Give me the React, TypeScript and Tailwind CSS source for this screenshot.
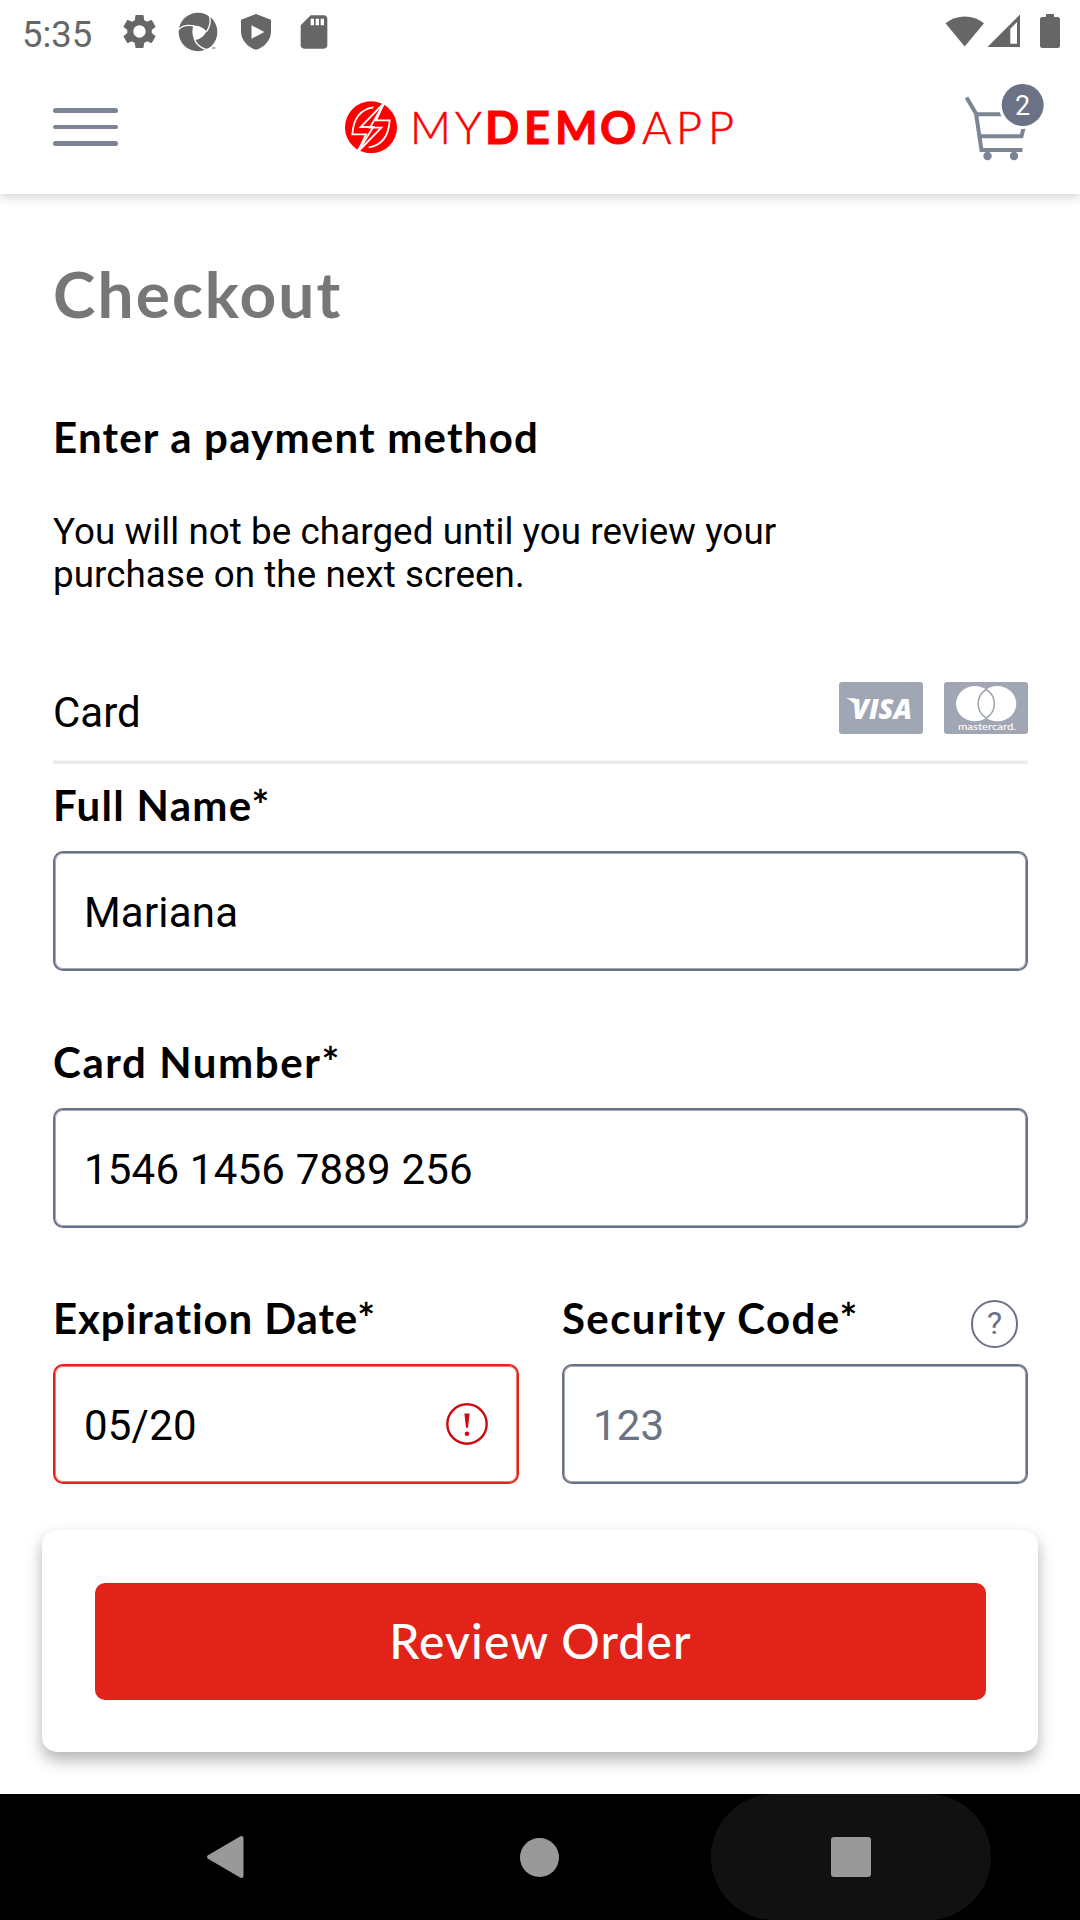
import type { ReactNode } from 'react';
import { MdSettings, MdSdCard } from 'react-icons/md';

function CaptureIcon() {
  return (
    <svg width="40" height="40" viewBox="0 0 120 120">
      <circle cx="60" cy="60" r="58" fill="#666" />
      <path d="M46 42 C62 40 74 46 86 58 C76 76 62 84 50 84 C43 72 41 56 46 42Z" fill="#fff" />
      <g fill="none" stroke="#fff" strokeWidth="4">
        <path d="M0 54 C12 40 30 38 50 42" />
        <path d="M94 10 C100 28 96 44 86 59" />
        <path d="M48 78 C54 96 68 108 86 113" />
      </g>
      <path d="M80 118 L90 108 L108 106 L112 118Z" fill="#fff" />
      <path d="M102 108 H112" stroke="#666" strokeWidth="3" />
    </svg>
  );
}

function ShieldIcon() {
  return (
    <svg width="30" height="36" viewBox="0 0 30 36">
      <path d="M15 0 L30 5.8 V17 C30 26 23.5 33.4 15 35.8 C6.5 33.4 0 26 0 17 V5.8Z" fill="#666" />
      <path d="M10.5 11.3 L23.3 18 L10.5 24.7Z" fill="#fff" />
    </svg>
  );
}

function StatusBar() {
  return (
    <div className="relative z-10 flex h-[63px] shrink-0 items-start justify-between bg-white font-[Roboto,sans-serif] text-[#666]">
      <div className="flex items-start pl-[22px]">
        <span className="w-[97px] pt-px text-[36.500px] leading-[67px]">5:35</span>
        <MdSettings className="mt-[11px] h-[41px] w-[41px]" />
        <div className="mt-[12px] ml-[18px]">
          <CaptureIcon />
        </div>
        <div className="mt-[14px] ml-[23px]">
          <ShieldIcon />
        </div>
        <MdSdCard className="mt-[12px] ml-[23px] h-[40px] w-[40px]" />
      </div>
      <svg width="116" height="34" viewBox="0 0 116 34" className="mt-[14px] mr-[19px]">
        <g fill="#666">
          <path d="M0.5 9.3 A31 31 0 0 1 39 9.3 L19.7 32.5Z" />
          <path fillRule="evenodd" d="M75 0.5 V33 H42.5Z M72 8 L65.300 14.700 V29.700 H72Z" />
          <path d="M101 0 H109 V3 H112.500 Q115 3 115 5 V31.500 Q115 34 112.500 34 H97.500 Q95 34 95 31.500 V5 Q95 3 97.500 3 H101Z" />
        </g>
      </svg>
    </div>
  );
}

function Logo() {
  return (
    <svg width="400" height="72" viewBox="0 -10 400 72" fill="#f00" fontFamily="Lato, sans-serif" fontSize="45">
      <g transform="translate(-25 -22) scale(0.3333)">
        <circle cx="153" cy="142" r="78" />
        <g fill="none" stroke="#fff" strokeWidth="5.5" strokeLinejoin="miter">
          <path d="M193 68 L168 121 H209 C206 168 186 196 146 202" />
          <path d="M113 216 L138 163 H97 C100 116 120 88 160 82" />
          <path d="M193 68 L122 141 H160 L113 216" />
          <path d="M193 68 L150 143 H184 L113 216" />
        </g>
      </g>
      <text y="42" x="65 110" fontWeight="300" stroke="#f00" strokeWidth="0.6">MY</text>
      <text y="42" x="140 179 210 255" fontWeight="700" stroke="#f00" strokeWidth="1">DEMO</text>
      <text y="42" x="297 331 363" fontWeight="300" stroke="#f00" strokeWidth="0.6">APP</text>
    </svg>
  );
}

function Header() {
  return (
    <header className="flex h-[131px] shrink-0 items-start bg-white pl-[53px] shadow-[0_3px_10px_rgba(0,0,0,0.18)]">
      <button className="mt-[45px] flex w-[65px] flex-col gap-[12px]" aria-label="Menu">
        <span className="h-[4.5px] w-full rounded-full bg-[#7b8494]" />
        <span className="h-[4.5px] w-full rounded-full bg-[#7b8494]" />
        <span className="h-[4.5px] w-full rounded-full bg-[#7b8494]" />
      </button>
      <div className="mt-[29px] ml-[227px]">
        <Logo />
      </div>
      <svg width="80" height="80" viewBox="0 0 80 80" className="mt-[19px] ml-[219px]">
        <g fill="none" stroke="#7b8594" strokeWidth="4">
          <path d="M2.5 15.5 L12 31.5 L17.5 68 H58.5" />
          <path d="M12 32.300 H63 L57.500 54.300 H16" />
        </g>
        <circle cx="23.5" cy="74" r="4.2" fill="#7b8594" />
        <circle cx="50" cy="74" r="4.2" fill="#7b8594" />
        <circle cx="58.7" cy="23" r="24" fill="#fff" />
        <circle cx="58.7" cy="23" r="21" fill="#6b7285" />
        <text x="58.7" y="33" textAnchor="middle" fontFamily="Roboto, sans-serif" fontSize="27" fill="#fff">2</text>
      </svg>
    </header>
  );
}

function Label({ children, spacing }: { children: ReactNode; spacing: string }) {
  return (
    <label className={`block pt-px font-[Lato,sans-serif] text-[42px] leading-[49px] font-bold whitespace-nowrap text-black ${spacing}`}>
      {children}
    </label>
  );
}

function Field({ value, tone = 'normal', children }: { value: string; tone?: 'normal' | 'error' | 'empty'; children?: ReactNode }) {
  const border =
    tone === 'error'
      ? 'border-[#e2231a] text-black shadow-[inset_0_0_0_1px_rgba(226,35,26,0.6)]'
      : tone === 'empty'
        ? 'border-[#6b7285] text-[#6b7285] shadow-[inset_0_0_0_1px_rgba(107,114,133,0.6)]'
        : 'border-[#6b7285] text-black shadow-[inset_0_0_0_1px_rgba(107,114,133,0.6)]';
  return (
    <div className={`mt-[21px] flex h-[120px] items-center justify-between rounded-[10px] border-2 pr-[28px] pl-[29px] ${border}`}>
      <span className="pt-[3px] text-[42px] leading-[50px] tracking-[0.2px]">{value}</span>
      {children}
    </div>
  );
}

function ErrorIcon() {
  return (
    <svg width="44" height="44" viewBox="0 0 44 44">
      <circle cx="22" cy="22" r="19.7" fill="none" stroke="#cc0a10" strokeWidth="2.4" />
      <path d="M19.4 11.5 H24.6 L23 25.8 H21Z" fill="#cc0a10" />
      <circle cx="22" cy="31.8" r="2.3" fill="#cc0a10" />
    </svg>
  );
}

function VisaBadge() {
  return (
    <svg width="84" height="52" viewBox="0 0 84 52">
      <rect width="84" height="52" rx="3" fill="#a0a6b3" />
      <path d="M7 16.3 H15 Q17.5 16.5 18.2 19 L20 29 Q15 19 7 16.3Z" fill="#fff" />
      <text x="13" y="36.5" fontFamily="'Open Sans', sans-serif" fontStyle="italic" fontWeight="800" fontSize="28" textLength="60" lengthAdjust="spacingAndGlyphs" fill="#fff">
        VISA
      </text>
    </svg>
  );
}

function MastercardBadge() {
  return (
    <svg width="84" height="52" viewBox="0 0 84 52">
      <rect width="84" height="52" rx="3" fill="#a0a6b3" />
      <ellipse cx="31" cy="21.7" rx="19" ry="17.6" fill="#fff" />
      <ellipse cx="53.3" cy="21.7" rx="19" ry="17.6" fill="#fff" />
      <path d="M42.2 7.5 C53 14 53 29.5 42.2 36 C31.5 29.5 31.500 14 42.200 7.500Z" fill="none" stroke="#a0a6b3" strokeWidth="1.6" />
      <text x="14" y="48" fontFamily="Lato, sans-serif" fontWeight="500" fontSize="10" textLength="58" lengthAdjust="spacingAndGlyphs" fill="#fff">
        mastercard.
      </text>
    </svg>
  );
}

function NavBar() {
  return (
    <nav className="grid h-[126px] grid-cols-[89px_280px_31px_280px_31px_280px_89px] items-stretch bg-black">
      <button className="col-start-2 flex items-center justify-center" aria-label="Back">
        <svg width="40" height="44" viewBox="0 0 40 44" className="mr-[10px]">
          <path d="M5 22 L37.5 3 V41Z" fill="#999" stroke="#999" strokeWidth="4" strokeLinejoin="round" />
        </svg>
      </button>
      <button className="col-start-4 flex items-center justify-center" aria-label="Home">
        <span className="mr-px h-[39px] w-[39px] rounded-full bg-[#999]" />
      </button>
      <button className="col-start-6 flex items-center justify-center rounded-[63px] bg-[#111]" aria-label="Recent apps">
        <span className="h-[40px] w-[40px] rounded-[3px] bg-[#999]" />
      </button>
    </nav>
  );
}

export default function App() {
  return (
    <div className="flex h-[1920px] w-[1080px] flex-col overflow-hidden bg-white font-[Roboto,sans-serif] text-black">
      <StatusBar />
      <Header />
      <main className="px-[53px] pt-[62px]">
        <h1 className="font-[Lato,sans-serif] text-[64px] leading-[76px] font-bold tracking-[2.1px] text-[#777]">Checkout</h1>
        <h2 className="mt-[81px] font-[Lato,sans-serif] text-[42px] leading-[49px] font-bold tracking-[1.2px]">Enter a payment method</h2>
        <p className="mt-[48px] text-[36.75px] leading-[43px] tracking-[0.07px]">
          You will not be charged until you review your
          <br />
          purchase on the next screen.
        </p>
        <div className="mt-[86px] flex h-[52px] w-[975px] items-start justify-between">
          <span className="pt-[6px] text-[42px] leading-[50px]">Card</span>
          <div className="flex gap-[21px]">
            <VisaBadge />
            <MastercardBadge />
          </div>
        </div>
        <div className="mt-[26px] mb-[16px] h-[4px] w-[975px] border-t border-[#f6f6f6] bg-[#ececec]" />
        <Label spacing="tracking-[1.3px]">Full Name*</Label>
        <div className="w-[975px]">
          <Field value="Mariana" />
        </div>
        <div className="mt-[66px] w-[975px]">
          <Label spacing="tracking-[1.6px]">Card Number*</Label>
          <Field value="1546 1456 7889 256" />
        </div>
        <div className="mt-[65px] grid w-[975px] grid-cols-2 gap-[43px]">
          <div>
            <Label spacing="tracking-[0.9px]">Expiration Date*</Label>
            <Field value="05/20" tone="error">
              <ErrorIcon />
            </Field>
          </div>
          <div>
            <div className="flex h-[50px] items-start justify-between pr-[10px]">
              <Label spacing="tracking-[1.4px]">Security Code*</Label>
              <span className="mt-[7px] flex h-[48px] w-[47px] shrink-0 items-center justify-center rounded-full border-2 border-[#6b7285] pb-[3px] text-[32px] leading-none text-[#6b7285]">?</span>
            </div>
            <Field value="123" tone="empty" />
          </div>
        </div>
      </main>
      <section className="mx-[42px] mt-[46px] h-[222px] shrink-0 rounded-[15px] bg-white px-[53px] pt-[53px] shadow-[0_8px_16px_rgba(0,0,0,0.3)]">
        <button className="h-[117px] w-[891px] rounded-[10px] bg-[#e2231a] pb-[1px] font-[Lato,sans-serif] text-[48px] font-medium tracking-[1.1px] text-white">
          Review Order
        </button>
      </section>
      <div className="mt-auto">
        <NavBar />
      </div>
    </div>
  );
}
